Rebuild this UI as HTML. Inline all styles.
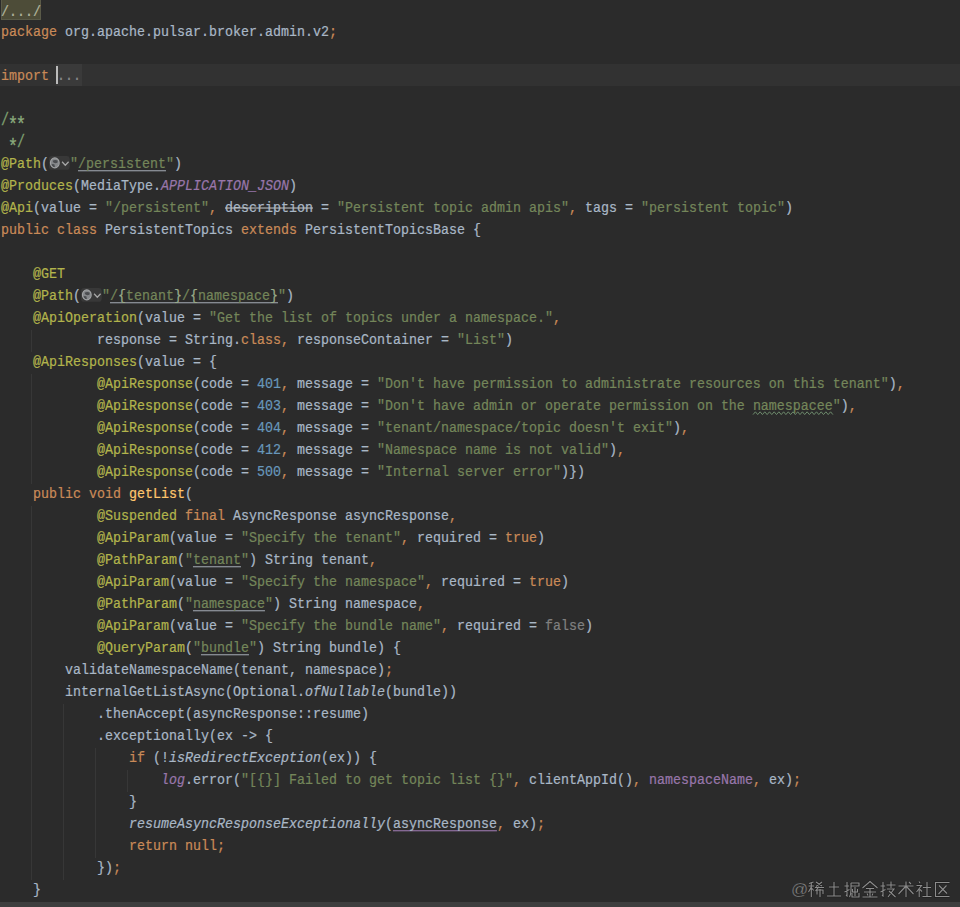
<!DOCTYPE html>
<html><head><meta charset="utf-8"><style>
html,body{margin:0;padding:0;}
body{width:960px;height:907px;background:#2b2b2b;overflow:hidden;position:relative;font-family:"Liberation Mono",monospace;font-size:13.333px;}
.l{position:absolute;left:1px;height:22px;line-height:22px;white-space:pre;color:#a9b7c6;transform:scaleY(1.12);transform-origin:0 14.5px;-webkit-text-stroke:0.2px;}
.k{color:#c98a58}.a{color:#b2b44c}.s{color:#74865a}.n{color:#6897bb}.d{color:#a9b7c6}
.c{color:#7fa070}.cs{color:#7fa070;display:inline-block;transform:translateY(0.5px) scaleY(1.2)}.ca{color:#8aaa7c;display:inline-block;transform:translateY(5px) scale(1.3)}.p{color:#9876aa}.pi{color:#9876aa;font-style:italic}.m{color:#ffc66d}
.it{font-style:italic}.g{color:#808080}
.su{color:#74865a;text-decoration:underline;text-decoration-color:#9aa0a8;text-underline-offset:2px}
.sbu{color:#9aac8a;text-decoration:underline;text-decoration-color:#9aa0a8;text-underline-offset:2px}
.swavy{color:#74865a;text-decoration:underline wavy #8a9a78;text-decoration-thickness:1px;text-underline-offset:2px}
.pu{color:#a9b7c6;text-decoration:underline;text-decoration-color:#9876aa;text-underline-offset:2px}
.strike{color:#a9b7c6;text-decoration:line-through;text-decoration-color:#b8bcc0}
.inlay{display:inline-block;width:21px;height:13px;vertical-align:-2px;}
[class]{text-decoration-skip-ink:none}
.guide{position:absolute;width:1px;background:#373737}
#cur{position:absolute;left:0;top:64px;width:960px;height:22px;background:#323232}
#fold1{position:absolute;left:1px;top:0;width:40px;height:20px;background:#4d4c38;border:1px solid #5a5a48;border-top:none;box-sizing:border-box}
#fold2{position:absolute;left:56px;top:64px;width:26px;height:22px;background:#3a3a3a}
#caret{position:absolute;left:56px;top:66px;width:2px;height:18px;background:#bbbbbb}
#bottom{position:absolute;left:0;top:902px;width:960px;height:5px;background:#3e3e3e}
#wm{position:absolute;left:0;top:0;}
</style></head><body>
<div id="cur"></div>
<div id="fold1"></div>
<div id="fold2"></div>

<div class="guide" style="left:31px;top:330px;height:22px"></div>
<div class="guide" style="left:31px;top:374px;height:110px"></div>
<div class="guide" style="left:31px;top:506px;height:374px"></div>
<div class="guide" style="left:63px;top:704px;height:176px"></div>
<div class="guide" style="left:95px;top:748px;height:110px"></div>
<div class="guide" style="left:127px;top:770px;height:22px"></div>
<div class="l" style="top:1.5px;color:#b0b49c">/.../</div>
<div class="l" style="top:22px"><span class="k">package</span><span class="d"> org.apache.pulsar.broker.admin.v2</span><span class="k">;</span></div>
<div class="l" style="top:66px"><span class="k">import</span><span class="d"> </span></div>
<div class="l" style="top:110px"><span class="cs">/</span><span class="ca">*</span><span class="ca">*</span></div>
<div class="l" style="top:132px"><span class="c"> </span><span class="ca">*</span><span class="cs">/</span></div>
<div class="l" style="top:154px"><span class="a">@Path</span><span class="d">(</span><svg class="inlay" width="21" height="13" viewBox="0 0 21 13"><rect x="0" y="0.3" width="20.7" height="12.4" rx="3" fill="#383838"/><circle cx="5.8" cy="6.5" r="4.3" fill="#85878a"/><path d="M3.6 4.6 Q6 3.2 8.8 4.4 L8.4 6.4 L6.2 6.8 L4.4 6.2 Z M2.4 7.4 L5.4 7.6 L6 10.6 L3.6 10 Z" fill="#4b4d50"/><circle cx="5.8" cy="6.5" r="4.4" fill="none" stroke="#a2a4a6" stroke-width="1.1"/><path d="M13.1 5.4 L16.3 8.6 L19.6 5.4" fill="none" stroke="#a6a6a6" stroke-width="1.3"/></svg><span class="s">"</span><span class="su">/persistent</span><span class="s">"</span><span class="d">)</span></div>
<div class="l" style="top:176px"><span class="a">@Produces</span><span class="d">(MediaType.</span><span class="pi">APPLICATION_JSON</span><span class="d">)</span></div>
<div class="l" style="top:198px"><span class="a">@Api</span><span class="d">(value = </span><span class="s">"/persistent"</span><span class="k">,</span><span class="d"> </span><span class="strike">description</span><span class="d"> = </span><span class="s">"Persistent topic admin apis"</span><span class="k">,</span><span class="d"> tags = </span><span class="s">"persistent topic"</span><span class="d">)</span></div>
<div class="l" style="top:220px"><span class="k">public class </span><span class="d">PersistentTopics </span><span class="k">extends </span><span class="d">PersistentTopicsBase {</span></div>
<div class="l" style="top:264px"><span class="d">    </span><span class="a">@GET</span></div>
<div class="l" style="top:286px"><span class="d">    </span><span class="a">@Path</span><span class="d">(</span><svg class="inlay" width="21" height="13" viewBox="0 0 21 13"><rect x="0" y="0.3" width="20.7" height="12.4" rx="3" fill="#383838"/><circle cx="5.8" cy="6.5" r="4.3" fill="#85878a"/><path d="M3.6 4.6 Q6 3.2 8.8 4.4 L8.4 6.4 L6.2 6.8 L4.4 6.2 Z M2.4 7.4 L5.4 7.6 L6 10.6 L3.6 10 Z" fill="#4b4d50"/><circle cx="5.8" cy="6.5" r="4.4" fill="none" stroke="#a2a4a6" stroke-width="1.1"/><path d="M13.1 5.4 L16.3 8.6 L19.6 5.4" fill="none" stroke="#a6a6a6" stroke-width="1.3"/></svg><span class="s">"</span><span class="su">/</span><span class="sbu">{</span><span class="su">tenant</span><span class="sbu">}</span><span class="su">/</span><span class="sbu">{</span><span class="su">namespace</span><span class="sbu">}</span><span class="s">"</span><span class="d">)</span></div>
<div class="l" style="top:308px"><span class="d">    </span><span class="a">@ApiOperation</span><span class="d">(value = </span><span class="s">"Get the list of topics under a namespace."</span><span class="k">,</span></div>
<div class="l" style="top:330px"><span class="d">            response = String.</span><span class="k">class</span><span class="k">,</span><span class="d"> responseContainer = </span><span class="s">"List"</span><span class="d">)</span></div>
<div class="l" style="top:352px"><span class="d">    </span><span class="a">@ApiResponses</span><span class="d">(value = {</span></div>
<div class="l" style="top:374px"><span class="d">            </span><span class="a">@ApiResponse</span><span class="d">(code = </span><span class="n">401</span><span class="k">,</span><span class="d"> message = </span><span class="s">"Don't have permission to administrate resources on this tenant"</span><span class="d">)</span><span class="k">,</span></div>
<div class="l" style="top:396px"><span class="d">            </span><span class="a">@ApiResponse</span><span class="d">(code = </span><span class="n">403</span><span class="k">,</span><span class="d"> message = </span><span class="s">"Don't have admin or operate permission on the </span><span class="s">namespacee</span><span class="s">"</span><span class="d">)</span><span class="k">,</span></div>
<div class="l" style="top:418px"><span class="d">            </span><span class="a">@ApiResponse</span><span class="d">(code = </span><span class="n">404</span><span class="k">,</span><span class="d"> message = </span><span class="s">"tenant/namespace/topic doesn't exit"</span><span class="d">)</span><span class="k">,</span></div>
<div class="l" style="top:440px"><span class="d">            </span><span class="a">@ApiResponse</span><span class="d">(code = </span><span class="n">412</span><span class="k">,</span><span class="d"> message = </span><span class="s">"Namespace name is not valid"</span><span class="d">)</span><span class="k">,</span></div>
<div class="l" style="top:462px"><span class="d">            </span><span class="a">@ApiResponse</span><span class="d">(code = </span><span class="n">500</span><span class="k">,</span><span class="d"> message = </span><span class="s">"Internal server error"</span><span class="d">)})</span></div>
<div class="l" style="top:484px"><span class="d">    </span><span class="k">public void </span><span class="m">getList</span><span class="d">(</span></div>
<div class="l" style="top:506px"><span class="d">            </span><span class="a">@Suspended </span><span class="k">final </span><span class="d">AsyncResponse asyncResponse</span><span class="k">,</span></div>
<div class="l" style="top:528px"><span class="d">            </span><span class="a">@ApiParam</span><span class="d">(value = </span><span class="s">"Specify the tenant"</span><span class="k">,</span><span class="d"> required = </span><span class="k">true</span><span class="d">)</span></div>
<div class="l" style="top:550px"><span class="d">            </span><span class="a">@PathParam</span><span class="d">(</span><span class="s">"</span><span class="su">tenant</span><span class="s">"</span><span class="d">) String tenant</span><span class="k">,</span></div>
<div class="l" style="top:572px"><span class="d">            </span><span class="a">@ApiParam</span><span class="d">(value = </span><span class="s">"Specify the namespace"</span><span class="k">,</span><span class="d"> required = </span><span class="k">true</span><span class="d">)</span></div>
<div class="l" style="top:594px"><span class="d">            </span><span class="a">@PathParam</span><span class="d">(</span><span class="s">"</span><span class="su">namespace</span><span class="s">"</span><span class="d">) String namespace</span><span class="k">,</span></div>
<div class="l" style="top:616px"><span class="d">            </span><span class="a">@ApiParam</span><span class="d">(value = </span><span class="s">"Specify the bundle name"</span><span class="k">,</span><span class="d"> required = </span><span class="g">false</span><span class="d">)</span></div>
<div class="l" style="top:638px"><span class="d">            </span><span class="a">@QueryParam</span><span class="d">(</span><span class="s">"</span><span class="su">bundle</span><span class="s">"</span><span class="d">) String bundle) {</span></div>
<div class="l" style="top:660px"><span class="d">        validateNamespaceName(tenant, namespace)</span><span class="k">;</span></div>
<div class="l" style="top:682px"><span class="d">        internalGetListAsync(Optional.</span><span class="it">ofNullable</span><span class="d">(bundle))</span></div>
<div class="l" style="top:704px"><span class="d">            .thenAccept(asyncResponse::resume)</span></div>
<div class="l" style="top:726px"><span class="d">            .exceptionally(ex -&gt; {</span></div>
<div class="l" style="top:748px"><span class="d">                </span><span class="k">if </span><span class="d">(!</span><span class="it">isRedirectException</span><span class="d">(ex)) {</span></div>
<div class="l" style="top:770px"><span class="d">                    </span><span class="pi">log</span><span class="d">.error(</span><span class="s">"[{}] Failed to get topic list {}"</span><span class="k">,</span><span class="d"> clientAppId()</span><span class="k">,</span><span class="d"> </span><span class="p">namespaceName</span><span class="k">,</span><span class="d"> ex)</span><span class="k">;</span></div>
<div class="l" style="top:792px"><span class="d">                }</span></div>
<div class="l" style="top:814px"><span class="d">                </span><span class="it">resumeAsyncResponseExceptionally</span><span class="d">(</span><span class="pu">asyncResponse</span><span class="k">,</span><span class="d"> ex)</span><span class="k">;</span></div>
<div class="l" style="top:836px"><span class="d">                </span><span class="k">return null;</span></div>
<div class="l" style="top:858px"><span class="d">            })</span><span class="k">;</span></div>
<div class="l" style="top:880px"><span class="d">    }</span></div>
<div class="l" style="top:66px;left:57px;color:#8a8a8a">...</div>
<div id="caret"></div>
<div id="bottom"></div>
<svg id="wm" width="960" height="907" viewBox="0 0 960 907"><text x="791" y="895" font-family="Liberation Sans" font-size="17" fill="#8c8c8c" stroke="#1f1f1f" stroke-width="0.3">@</text><g transform="translate(808 881)"><path d="M5.5 1 L1 2.5 M0.5 5 L6 5 M3.3 2 L3.3 16 M3.3 6 L0.5 11 M3.5 7 L5.8 9.5 M8 1 L14 5 M14 1 L8 5.5 M7 6.5 L16 6.5 M11 5.5 L7.5 10 M9 9 L9 13.5 M9 9 L15 9 L15 13 M12 8 L12 16" stroke="#1f1f1f" stroke-width="2.4" fill="none"/><path d="M5.5 1 L1 2.5 M0.5 5 L6 5 M3.3 2 L3.3 16 M3.3 6 L0.5 11 M3.5 7 L5.8 9.5 M8 1 L14 5 M14 1 L8 5.5 M7 6.5 L16 6.5 M11 5.5 L7.5 10 M9 9 L9 13.5 M9 9 L15 9 L15 13 M12 8 L12 16" stroke="#8c8c8c" stroke-width="1.1" fill="none"/></g><g transform="translate(826 881)"><path d="M3 6 L13 6 M8 1 L8 15 M1 15 L15 15" stroke="#1f1f1f" stroke-width="2.4" fill="none"/><path d="M3 6 L13 6 M8 1 L8 15 M1 15 L15 15" stroke="#8c8c8c" stroke-width="1.1" fill="none"/></g><g transform="translate(844 881)"><path d="M0.5 5 L5 5 M3 1 L3 15 L2 14 M0.5 11 L5.5 8.5 M7 2 L15 2 L15 5 L7 5 M7 2 L7 9 Q7 13 5.5 16 M11 6 L11 15 M8.5 8 L8.5 11 L13.5 11 L13.5 8 M8 12 L8 16 L15 16 L15 12" stroke="#1f1f1f" stroke-width="2.4" fill="none"/><path d="M0.5 5 L5 5 M3 1 L3 15 L2 14 M0.5 11 L5.5 8.5 M7 2 L15 2 L15 5 L7 5 M7 2 L7 9 Q7 13 5.5 16 M11 6 L11 15 M8.5 8 L8.5 11 L13.5 11 L13.5 8 M8 12 L8 16 L15 16 L15 12" stroke="#8c8c8c" stroke-width="1.1" fill="none"/></g><g transform="translate(862 881)"><path d="M8 0.5 L0.5 7 M8 0.5 L15.5 7 M4 7.5 L12 7.5 M2 11 L14 11 M0.5 16 L15.5 16 M8 7.5 L8 16 M5 12.5 L6 14.5 M11 12.5 L10 14.5" stroke="#1f1f1f" stroke-width="2.4" fill="none"/><path d="M8 0.5 L0.5 7 M8 0.5 L15.5 7 M4 7.5 L12 7.5 M2 11 L14 11 M0.5 16 L15.5 16 M8 7.5 L8 16 M5 12.5 L6 14.5 M11 12.5 L10 14.5" stroke="#8c8c8c" stroke-width="1.1" fill="none"/></g><g transform="translate(880 881)"><path d="M0.5 5 L5 5 M3 1 L3 15 L2 14 M0.5 11 L5.5 8.5 M6.5 4 L15.5 4 M11 0.5 L11 7 M7 8 L14 8 L8 16 M9 10 L15.5 16" stroke="#1f1f1f" stroke-width="2.4" fill="none"/><path d="M0.5 5 L5 5 M3 1 L3 15 L2 14 M0.5 11 L5.5 8.5 M6.5 4 L15.5 4 M11 0.5 L11 7 M7 8 L14 8 L8 16 M9 10 L15.5 16" stroke="#8c8c8c" stroke-width="1.1" fill="none"/></g><g transform="translate(898 881)"><path d="M0.5 5 L15.5 5 M8 0.5 L8 16 M8 5 L0.5 13 M8 5 L15.5 13 M11 1 L13 3" stroke="#1f1f1f" stroke-width="2.4" fill="none"/><path d="M0.5 5 L15.5 5 M8 0.5 L8 16 M8 5 L0.5 13 M8 5 L15.5 13 M11 1 L13 3" stroke="#8c8c8c" stroke-width="1.1" fill="none"/></g><g transform="translate(916 881)"><path d="M3 0.5 L4 2 M0.5 4.5 L5.5 4.5 L0.5 11 M3.2 7.5 L3.2 16 M4 8.5 L6 10.5 M7 6.5 L15 6.5 M11 1 L11 15 M6.5 15.5 L15.5 15.5" stroke="#1f1f1f" stroke-width="2.4" fill="none"/><path d="M3 0.5 L4 2 M0.5 4.5 L5.5 4.5 L0.5 11 M3.2 7.5 L3.2 16 M4 8.5 L6 10.5 M7 6.5 L15 6.5 M11 1 L11 15 M6.5 15.5 L15.5 15.5" stroke="#8c8c8c" stroke-width="1.1" fill="none"/></g><g transform="translate(934 881)"><path d="M15.5 1.5 L1.5 1.5 L1.5 15.5 L15.5 15.5 M5 4.5 L13 12.5 M12.5 4.5 L4.5 13" stroke="#1f1f1f" stroke-width="2.4" fill="none"/><path d="M15.5 1.5 L1.5 1.5 L1.5 15.5 L15.5 15.5 M5 4.5 L13 12.5 M12.5 4.5 L4.5 13" stroke="#8c8c8c" stroke-width="1.1" fill="none"/></g></svg>
<svg style="position:absolute;left:0;top:0" width="960" height="907"><polyline points="753.0,414.6 755.4,411.8 757.7,414.6 760.1,411.8 762.4,414.6 764.8,411.8 767.1,414.6 769.5,411.8 771.8,414.6 774.2,411.8 776.5,414.6 778.9,411.8 781.2,414.6 783.6,411.8 785.9,414.6 788.3,411.8 790.6,414.6 793.0,411.8 795.3,414.6 797.7,411.8 800.0,414.6 802.4,411.8 804.7,414.6 807.1,411.8 809.4,414.6 811.8,411.8 814.1,414.6 816.5,411.8 818.8,414.6 821.2,411.8 823.5,414.6 825.9,411.8 828.2,414.6 830.6,411.8 832.9,414.6" fill="none" stroke="#6d8a6c" stroke-width="1"/></svg>
</body></html>
